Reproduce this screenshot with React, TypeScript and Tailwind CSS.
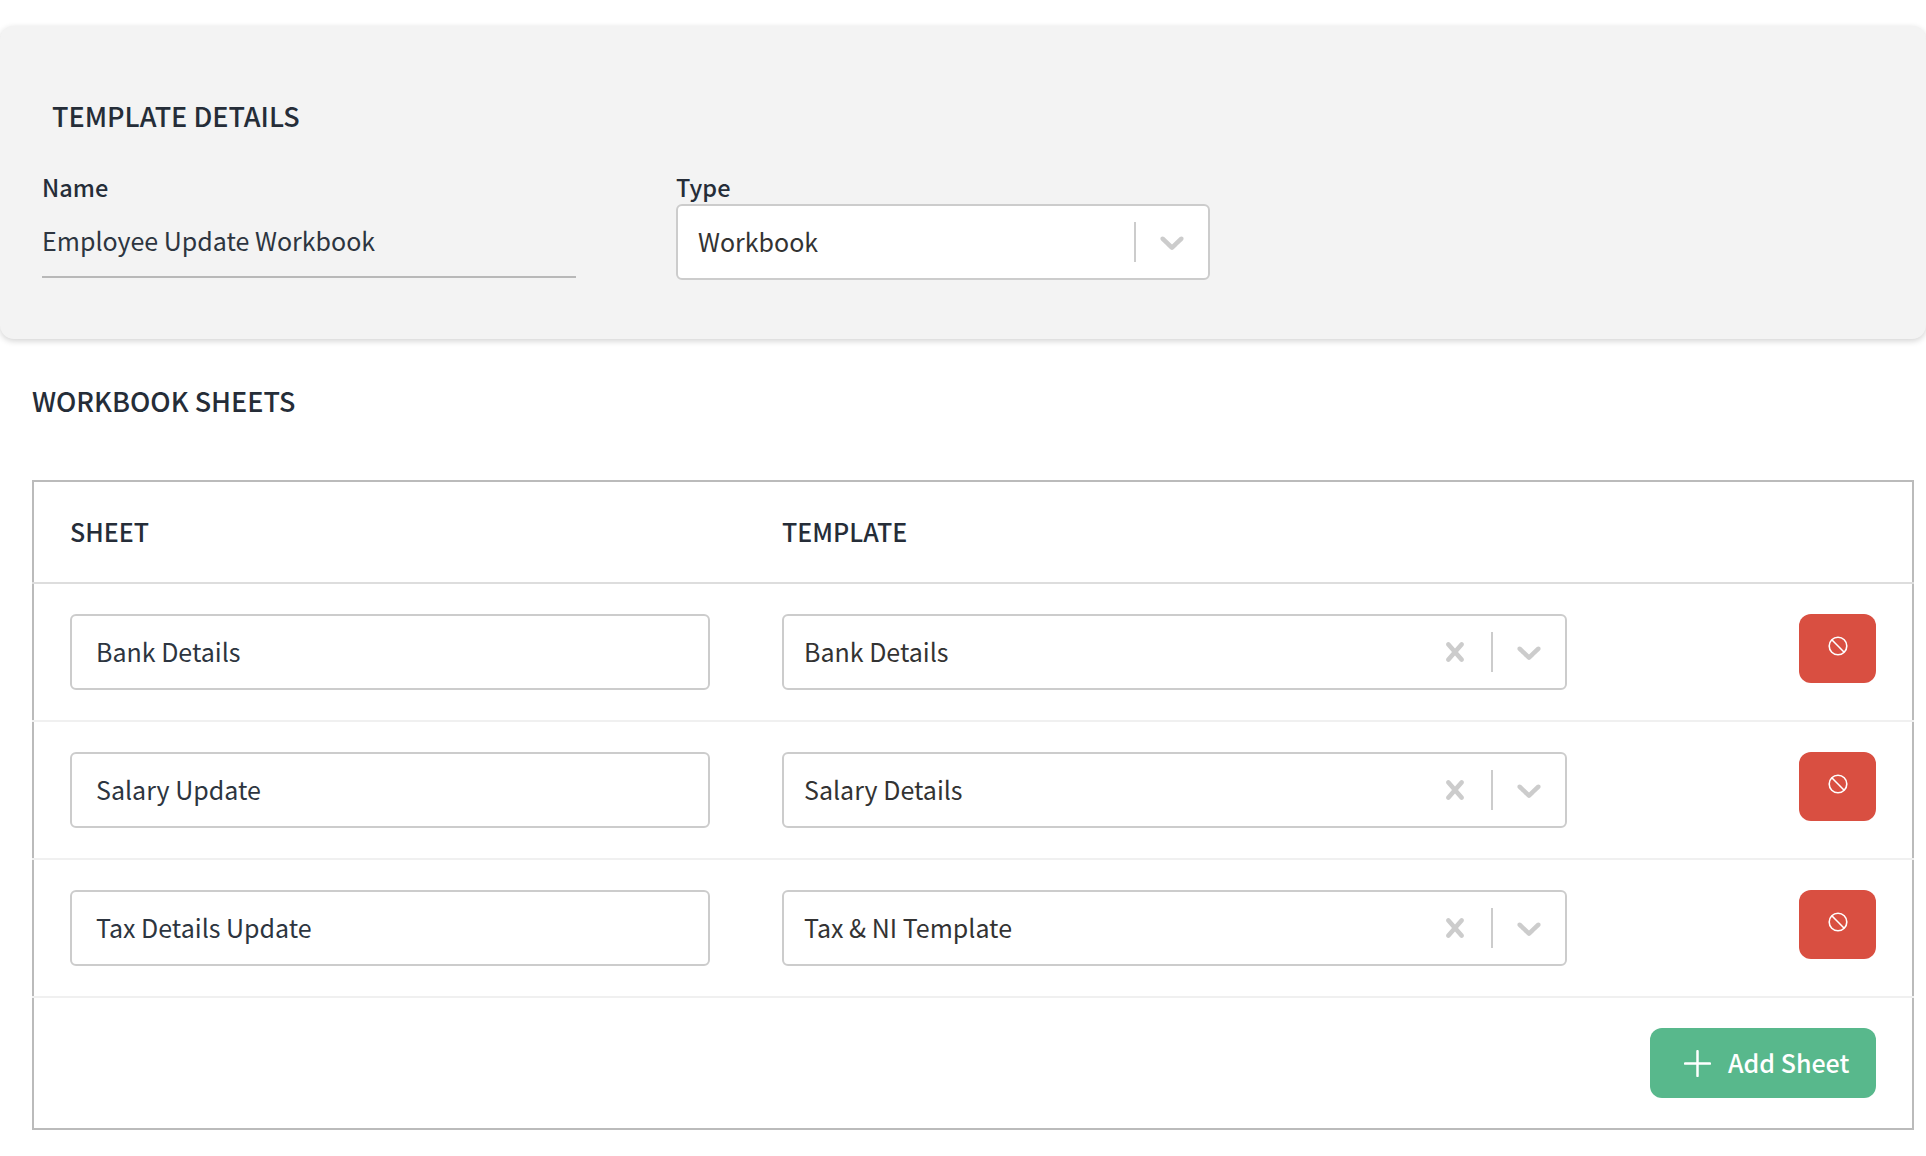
import React from "react";

const font = { fontFamily: '"Noto Sans CJK JP", "Noto Sans", sans-serif' };

function Cross() {
  return (
    <svg viewBox="0 0 20 20" className="w-[38px] h-[38px] shrink-0" fill="#cccccc">
      <path d="M14.348 14.849c-0.469 0.469-1.229 0.469-1.697 0l-2.651-3.030-2.651 3.029c-0.469 0.469-1.229 0.469-1.697 0-0.469-0.469-0.469-1.229 0-1.697l2.758-3.15-2.759-3.152c-0.469-0.469-0.469-1.228 0-1.697s1.228-0.469 1.697 0l2.652 3.031 2.651-3.031c0.469-0.469 1.228-0.469 1.697 0s0.469 1.229 0 1.697l-2.758 3.152 2.758 3.15c0.469 0.469 0.469 1.229 0 1.698z" />
    </svg>
  );
}

function Chevron() {
  return (
    <svg viewBox="0 0 20 20" className="w-[40px] h-[40px] shrink-0" fill="#cccccc">
      <path d="M4.516 7.548c0.436-0.446 1.043-0.481 1.576 0l3.908 3.747 3.908-3.747c0.533-0.481 1.141-0.446 1.574 0 0.436 0.445 0.408 1.197 0 1.615-0.406 0.418-4.695 4.502-4.695 4.502-0.217 0.223-0.502 0.335-0.787 0.335s-0.57-0.112-0.789-0.335c0 0-4.287-4.084-4.695-4.502s-0.436-1.17 0-1.615z" />
    </svg>
  );
}

function Ban() {
  return (
    <svg viewBox="0 0 20 20" className="w-[20px] h-[20px] mb-[5px]" fill="none" stroke="#ffffff" strokeWidth="1.6">
      <circle cx="10" cy="10" r="8.8" />
      <path d="M3.8 3.8 16.2 16.2" />
    </svg>
  );
}

function Row({ sheet, template }: { sheet: string; template: string }) {
  return (
    <div className="h-[138px] border-b-2 border-[#f0f0f0] -ml-[2px] -mr-[2px] pl-[38px] pr-[38px] flex items-start pt-[30px]">
      <div className="w-[640px] h-[76px] border-2 border-[#cccccc] rounded-[6px] bg-white flex items-center pl-[24px] text-[25px] text-[#2d3540] shrink-0">
        {sheet}
      </div>
      <div className="ml-[72px] w-[785px] h-[76px] border-2 border-[#cccccc] rounded-[6px] bg-white flex items-center pl-[20px] pr-[16px] text-[25px] text-[#333333] shrink-0">
        <span className="flex-1">{template}</span>
        <Cross />
        <span className="w-[2px] h-[40px] bg-[#cccccc] ml-[17px] mr-[16px]" />
        <Chevron />
      </div>
      <button className="ml-auto w-[77px] h-[69px] rounded-[12px] bg-[#d94f41] flex items-center justify-center">
        <Ban />
      </button>
    </div>
  );
}

export default function App() {
  return (
    <div className="w-[1926px] h-[1156px] bg-white overflow-hidden pt-[26px]" style={font}>
      <section className="h-[313px] bg-[#f3f3f3] rounded-[14px] shadow-[0_2px_6px_rgba(0,0,0,0.18)] pl-[42px] pt-[71px]">
        <h2 className="pl-[10px] text-[27px] leading-[38px] font-medium text-[#252d38]">TEMPLATE DETAILS</h2>
        <div className="flex mt-[35px]">
          <div className="w-[534px]">
            <div className="text-[23.5px] leading-[34px] font-medium text-[#252d38]">Name</div>
            <div className="h-[56px] mt-[18px] border-b-2 border-[#b8b8b8] text-[25px] leading-[36px] text-[#2d3540]">
              Employee Update Workbook
            </div>
          </div>
          <div className="ml-[100px] w-[534px]">
            <div className="text-[23.5px] leading-[34px] font-medium text-[#252d38]">Type</div>
            <div className="h-[76px] border-2 border-[#cccccc] rounded-[6px] bg-white flex items-center pl-[20px] pr-[16px] text-[25px] text-[#333333]">
              <span className="flex-1">Workbook</span>
              <span className="w-[2px] h-[40px] bg-[#cccccc] mr-[16px]" />
              <Chevron />
            </div>
          </div>
        </div>
      </section>

      <h2 className="pl-[32px] mt-[43px] text-[27px] leading-[38px] font-medium text-[#252d38]">WORKBOOK SHEETS</h2>

      <div className="mt-[60px] ml-[32px] w-[1882px] h-[650px] border-2 border-[#bbbbbb]">
        <div className="h-[102px] -ml-[2px] -mr-[2px] border-b-2 border-[#dddddd] pl-[38px] flex items-center text-[25px] font-medium text-[#252d38]">
          <span className="w-[712px]">SHEET</span>
          <span>TEMPLATE</span>
        </div>
        <Row sheet="Bank Details" template="Bank Details" />
        <Row sheet="Salary Update" template="Salary Details" />
        <Row sheet="Tax Details Update" template="Tax & NI Template" />
        <div className="flex justify-end pr-[36px] pt-[30px]">
          <button className="w-[226px] h-[70px] rounded-[12px] bg-[#58b88c] text-white text-[25px] font-medium flex items-center pl-[34px]">
            <svg viewBox="0 0 24 24" className="w-[27px] h-[27px] mr-[17px]" fill="none" stroke="#ffffff" strokeWidth="2.2" strokeLinecap="round">
              <path d="M12 1v22M1 12h22" />
            </svg>
            Add Sheet
          </button>
        </div>
      </div>
    </div>
  );
}
